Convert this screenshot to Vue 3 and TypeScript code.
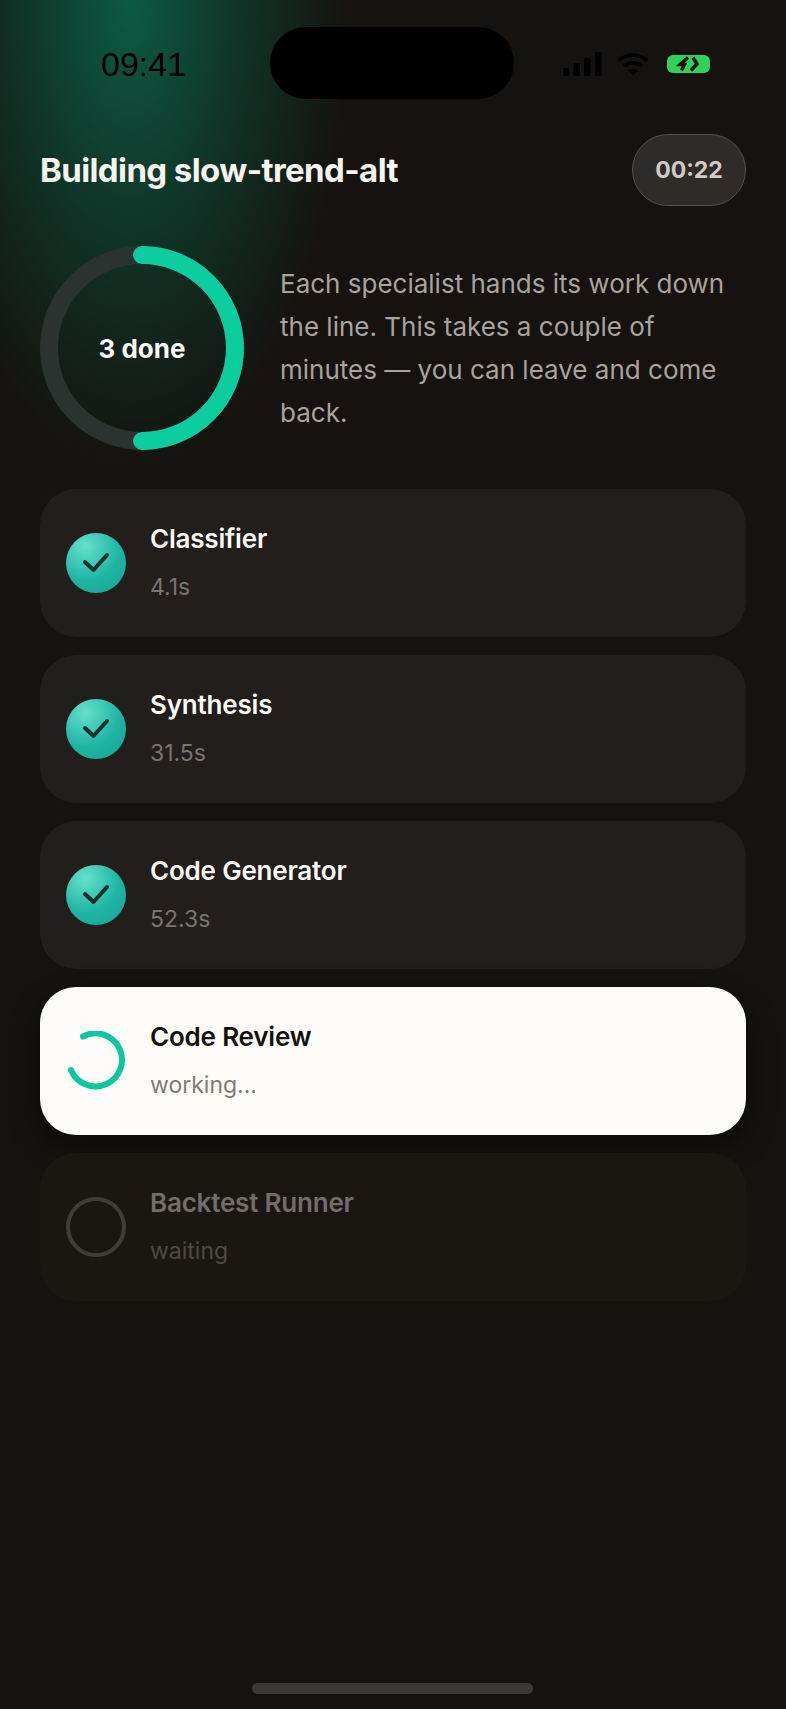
<script setup lang="ts">
interface Step {
  name: string
  detail: string
  state: 'done' | 'active' | 'waiting'
}

const steps: Step[] = [
  { name: 'Classifier', detail: '4.1s', state: 'done' },
  { name: 'Synthesis', detail: '31.5s', state: 'done' },
  { name: 'Code Generator', detail: '52.3s', state: 'done' },
  { name: 'Code Review', detail: 'working...', state: 'active' },
  { name: 'Backtest Runner', detail: 'waiting', state: 'waiting' },
]
</script>

<template>
  <div class="screen">
    <div class="glow"></div>

    <header class="status-bar">
      <span class="clock">09:41</span>
      <div class="island"></div>
      <div class="status-icons">
        <svg class="signal" viewBox="0 0 39 24" fill="#000">
          <rect x="0" y="16" width="6.5" height="8" rx="2" />
          <rect x="10.5" y="11" width="6.5" height="13" rx="1.5" />
          <rect x="21" y="6" width="6.5" height="18" rx="1.5" />
          <rect x="32" y="0" width="6.5" height="24" rx="1.5" />
        </svg>
        <svg class="wifi" viewBox="0 0 32 23" fill="none" stroke="#000" stroke-width="3.6">
          <path d="M1.5 7.5C9.5 0.5 22.5 0.5 30.5 7.5" />
          <path d="M7 13.2C12.5 8.8 19.5 8.8 25 13.2" />
          <path d="M16 22.5L10.6 17.6C13.8 15.4 18.2 15.4 21.4 17.6Z" fill="#000" stroke="none" />
        </svg>
        <svg class="battery" viewBox="0 0 43 18">
          <rect x="0" y="0" width="43" height="18" rx="6" fill="#30d158" />
          <path d="M21 2.5L13 9.5H17.5L14.5 15.5" fill="none" stroke="#15120f" stroke-width="3.4" />
          <path d="M26 2.5L30 9L24 15.5" fill="none" stroke="#15120f" stroke-width="3.4" />
        </svg>
      </div>
    </header>

    <section class="title-row">
      <h1>Building slow-trend-alt</h1>
      <div class="timer">00:22</div>
    </section>

    <section class="summary">
      <div class="ring">
        <svg viewBox="0 0 204 204">
          <circle cx="102" cy="102" r="93" fill="none" stroke="#2a332f" stroke-width="18" />
          <path d="M102 9A93 93 0 0 1 102 195" fill="none" stroke="#0ccd9d" stroke-width="18" stroke-linecap="round" />
        </svg>
        <span class="ring-label">3 done</span>
      </div>
      <p>Each specialist hands its work down the line. This takes a couple of minutes — you can leave and come back.</p>
    </section>

    <section class="steps">
      <article v-for="step in steps" :key="step.name" class="step" :class="step.state">
        <div v-if="step.state === 'done'" class="badge">
          <svg viewBox="0 0 60 60" fill="none" stroke="#12302d" stroke-width="4" stroke-linecap="round" stroke-linejoin="round">
            <path d="M19 29L27.5 37L41 22" />
          </svg>
        </div>
        <svg v-else-if="step.state === 'active'" class="spinner" viewBox="0 0 60 60" fill="none" stroke="#0fc79c" stroke-width="6" stroke-linecap="round">
          <path d="M17 5.5A26.5 26.5 0 1 1 5 39" />
        </svg>
        <div v-else class="pending"></div>
        <div class="step-text">
          <span class="step-name">{{ step.name }}</span>
          <span class="step-detail">{{ step.detail }}</span>
        </div>
      </article>
    </section>

    <div class="home-bar"></div>
  </div>
</template>

<style>
html,
body {
  margin: 0;
  background: #15120f;
}
</style>

<style scoped>
.screen {
  position: relative;
  height: 1709px;
  padding: 0 40px;
  box-sizing: border-box;
  display: flex;
  flex-direction: column;
  overflow: hidden;
  background: #15120f;
  font-family: Inter, "Noto Sans", sans-serif;
}

.glow {
  position: absolute;
  left: -90px;
  top: -470px;
  width: 440px;
  height: 940px;
  background: radial-gradient(closest-side, rgba(0, 190, 140, 0.42), rgba(0, 170, 125, 0.22) 50%, rgba(0, 150, 110, 0) 100%);
}

.status-bar {
  position: relative;
  height: 134px;
  flex-shrink: 0;
}

.clock {
  position: absolute;
  left: 61px;
  top: 44px;
  font-family: "Liberation Sans", sans-serif;
  font-size: 34px;
  line-height: 40px;
  color: #000;
}

.island {
  position: absolute;
  left: 230px;
  top: 27px;
  width: 244px;
  height: 72px;
  border-radius: 36px;
  background: #000;
}

.status-icons {
  position: absolute;
  left: 523px;
  top: 52px;
  display: flex;
  align-items: center;
  gap: 15px;
}

.signal {
  width: 39px;
  height: 24px;
}

.wifi {
  width: 32px;
  height: 23px;
}

.battery {
  width: 43px;
  height: 18px;
  margin-left: 3px;
}

.title-row {
  position: relative;
  display: flex;
  align-items: center;
  justify-content: space-between;
  height: 72px;
  padding-right: 0;
}

h1 {
  margin: 0;
  font-size: 33px;
  font-weight: 700;
  letter-spacing: -0.6px;
  color: #f6f4ef;
}

.timer {
  width: 114px;
  height: 72px;
  box-sizing: border-box;
  display: flex;
  align-items: center;
  justify-content: center;
  border: 1.5px solid #55524e;
  border-radius: 36px;
  background: #2e2b28;
  font-size: 23px;
  font-weight: 700;
  color: #cfcbc5;
}

.summary {
  position: relative;
  display: flex;
  align-items: center;
  gap: 36px;
  margin-top: 40px;
}

.ring {
  position: relative;
  width: 204px;
  height: 204px;
  flex-shrink: 0;
}

.ring svg {
  display: block;
  width: 100%;
  height: 100%;
}

.ring-label {
  position: absolute;
  inset: 0;
  display: flex;
  align-items: center;
  justify-content: center;
  font-size: 26px;
  font-weight: 700;
  color: #fff;
}

.summary p {
  margin: 0;
  font-size: 26px;
  line-height: 43px;
  color: #a8a39c;
}

.steps {
  display: flex;
  flex-direction: column;
  gap: 18px;
  margin-top: 39px;
}

.step {
  height: 148px;
  box-sizing: border-box;
  display: flex;
  align-items: center;
  gap: 24px;
  padding: 0 26px;
  border-radius: 36px;
  background: #211e1b;
}

.step.active {
  background: #fdfcf8;
  box-shadow: 0 12px 30px rgba(0, 0, 0, 0.4);
}

.step.waiting {
  background: #1a1712;
}

.badge {
  width: 60px;
  height: 60px;
  flex-shrink: 0;
  border-radius: 50%;
  background: radial-gradient(circle at 32% 22%, #66e0cd, #20b5a3 55%, #12a394);
}

.badge svg,
.spinner {
  display: block;
  width: 60px;
  height: 60px;
  flex-shrink: 0;
}

.pending {
  width: 60px;
  height: 60px;
  box-sizing: border-box;
  flex-shrink: 0;
  border: 4px solid #403d39;
  border-radius: 50%;
}

.step-text {
  display: flex;
  flex-direction: column;
  gap: 12px;
}

.step-name {
  font-size: 26px;
  line-height: 36px;
  font-weight: 600;
  letter-spacing: -0.2px;
  color: #fbfaf6;
}

.step-detail {
  font-size: 23px;
  line-height: 36px;
  font-weight: 400;
  color: #78746f;
}

.active .step-name {
  color: #12100d;
}

.active .step-detail {
  color: #7e7a75;
}

.waiting .step-name {
  color: #726e69;
}

.waiting .step-detail {
  color: #4d4a46;
}

.home-bar {
  position: absolute;
  left: 252px;
  bottom: 15px;
  width: 281px;
  height: 11px;
  border-radius: 6px;
  background: #3a3936;
}
</style>
